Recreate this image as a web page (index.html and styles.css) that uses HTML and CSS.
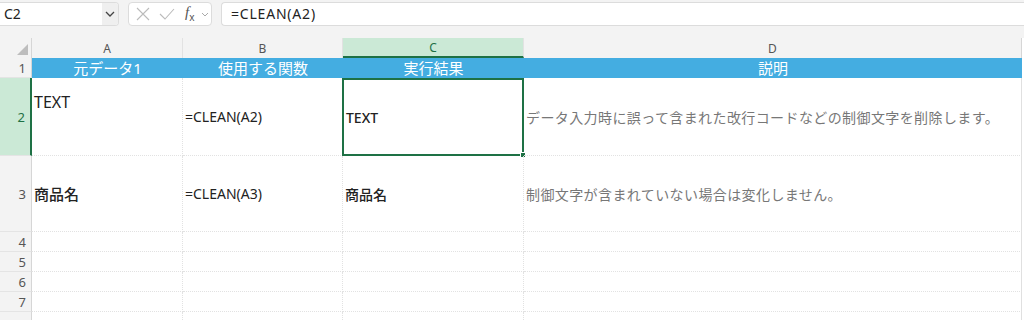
FILE: index.html
```html
<!DOCTYPE html>
<html lang="ja">
<head>
  <meta charset="UTF-8">
  <title>CLEAN</title>
  <link rel="stylesheet" href="styles.css">
</head>
<body>
<div class="toolbar">
  <div class="namebox">
    <span class="name">C2</span>
    <span class="chev">
      <svg width="12" height="12" viewBox="0 0 12 12"><path d="M2 4l4 4 4-4" fill="none" stroke="#444" stroke-width="1.3"/></svg>
    </span>
  </div>
  <div class="fxbox">
    <svg width="16" height="16" viewBox="0 0 16 16"><path d="M2 2l12 12M14 2L2 14" stroke="#bbb" stroke-width="1.1"/></svg>
    <svg width="18" height="16" viewBox="0 0 18 16"><path d="M2 8l5 5L16 3" fill="none" stroke="#bbb" stroke-width="1.1"/></svg>
    <span class="fx"><i>f</i><sub>x</sub></span>
    <svg width="8" height="8" viewBox="0 0 8 8"><path d="M1 3l3 3 3-3" fill="none" stroke="#aaa" stroke-width="1"/></svg>
  </div>
  <div class="formula">=CLEAN(A2)</div>
</div>

<div class="sheet">
  <div class="corner"><span class="tri"></span></div>
  <div class="colhead">A</div>
  <div class="colhead">B</div>
  <div class="colhead sel">C</div>
  <div class="colhead last">D</div>

  <div class="rowhead">1</div>
  <div class="th">元データ1</div>
  <div class="th">使用する関数</div>
  <div class="th">実行結果</div>
  <div class="th last">説明</div>

  <div class="rowhead sel">2</div>
  <div class="cell top big">TEXT</div>
  <div class="cell">=CLEAN(A2)</div>
  <div class="cell active"><b>TEXT</b><span class="handle"></span></div>
  <div class="cell note last">データ入力時に誤って含まれた改行コードなどの制御文字を削除します。</div>

  <div class="rowhead">3</div>
  <div class="cell"><b class="lg">商品名</b></div>
  <div class="cell">=CLEAN(A3)</div>
  <div class="cell"><b>商品名</b></div>
  <div class="cell note last">制御文字が含まれていない場合は変化しません。</div>

  <div class="rowhead">4</div><div class="cell"></div><div class="cell"></div><div class="cell"></div><div class="cell last"></div>
  <div class="rowhead">5</div><div class="cell"></div><div class="cell"></div><div class="cell"></div><div class="cell last"></div>
  <div class="rowhead">6</div><div class="cell"></div><div class="cell"></div><div class="cell"></div><div class="cell last"></div>
  <div class="rowhead">7</div><div class="cell"></div><div class="cell"></div><div class="cell"></div><div class="cell last"></div>
  <div class="rowhead"></div><div class="cell"></div><div class="cell"></div><div class="cell"></div><div class="cell last"></div>
</div>
</body>
</html>
```

FILE: styles.css
```css
* {
  margin: 0;
  padding: 0;
  box-sizing: border-box;
}

body {
  background: #f3f3f3;
  font-family: "Noto Sans", "Noto Sans CJK JP", sans-serif;
  color: #222;
  overflow: hidden;
}

.toolbar {
  display: flex;
  height: 38px;
  padding: 2px 0 0 0;
  gap: 9px;
  align-items: flex-start;
}

.namebox {
  display: flex;
  width: 119px;
  height: 24px;
  background: #fff;
  border: 1px solid #dcdcdc;
  border-left: 0;
  border-radius: 0 4px 4px 0;
  overflow: hidden;
}

.namebox .name {
  flex: 1;
  font-size: 14px;
  line-height: 22px;
  padding-left: 4px;
}

.namebox .chev {
  width: 16px;
  background: #efefef;
  display: flex;
  align-items: center;
  justify-content: center;
}

.fxbox {
  display: flex;
  align-items: center;
  gap: 7px;
  width: 84px;
  height: 24px;
  padding-left: 6px;
  background: #fff;
  border: 1px solid #dcdcdc;
  border-radius: 4px;
}

.fx {
  font-family: "Liberation Serif", serif;
  font-size: 15px;
  color: #555;
  margin-left: 2px;
}

.fx sub {
  font-size: 10px;
  font-family: "Noto Sans", sans-serif;
}

.formula {
  flex: 1;
  height: 24px;
  background: #fff;
  border: 1px solid #dcdcdc;
  border-right: 0;
  border-radius: 4px 0 0 4px;
  font-size: 14px;
  letter-spacing: 0.8px;
  line-height: 22px;
  padding-left: 9px;
}

.sheet {
  display: grid;
  grid-template-columns: 32px 151px 160px 181px 498px;
  grid-template-rows: 20px 20px 78px 76px 20px 20px 20px 20px 20px;
  background: #fff;
}

.corner {
  background: #f3f3f3;
  border-right: 1px solid #d6d6d6;
  position: relative;
}

.corner .tri {
  position: absolute;
  right: 3px;
  bottom: 3px;
  width: 0;
  height: 0;
  border-left: 11px solid transparent;
  border-bottom: 11px solid #bdbdbd;
}

.colhead {
  background: #f3f3f3;
  border-right: 1px solid #e2e2e2;
  font-size: 12px;
  color: #555;
  text-align: center;
  line-height: 20px;
  padding-top: 1px;
}

.colhead.sel {
  background: #cbe9d6;
  color: #1e7145;
  border-bottom: 2px solid #1e7145;
  line-height: 18px;
}

.colhead.last {
  border-right: 1px solid #d6d6d6;
}

.rowhead {
  background: #f3f3f3;
  border-right: 1px solid #d6d6d6;
  border-bottom: 1px solid #e4e4e4;
  font-size: 13px;
  color: #555;
  padding-right: 5px;
  display: flex;
  align-items: center;
  justify-content: flex-end;
}

.rowhead.sel {
  background: #cbe9d6;
  color: #1e7145;
  border-right: 2px solid #1e7145;
}

.th {
  background: #44ade1;
  color: #fff;
  font-size: 15px;
  text-align: center;
  line-height: 20px;
}

.cell {
  border-right: 1px dotted #e2e2e2;
  border-bottom: 1px dotted #e2e2e2;
  font-size: 14px;
  padding-left: 2px;
  display: flex;
  align-items: center;
  position: relative;
}

.cell b {
  font-weight: 500;
  font-size: 14px;
}

.cell b.lg {
  font-size: 15px;
}

.cell.top {
  align-items: flex-start;
  padding-top: 13px;
}

.cell.big {
  font-size: 16px;
}

.cell.note {
  color: #777;
  font-size: 14px;
  letter-spacing: 0.4px;
}

.cell.last {
  border-right: 1px solid #e0e0e0;
}

.cell.active {
  border: 2px solid #1e7145;
  margin-left: -1px;
  padding-left: 2px;
}

.handle {
  position: absolute;
  right: -4px;
  bottom: -4px;
  width: 6px;
  height: 6px;
  background: #1e7145;
  border: 1px solid #fff;
}
```
